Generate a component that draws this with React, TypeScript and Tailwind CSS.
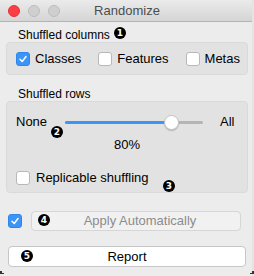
import React from "react";

const Badge = ({ n, className }: { n: string; className: string }) => (
  <div
    className={
      "absolute w-[12px] h-[12px] rounded-full bg-black text-white text-[9px] font-bold leading-none flex items-center justify-center " +
      className
    }
    style={{ fontFamily: '"DejaVu Sans", sans-serif' }}
  >
    {n}
  </div>
);

const Check = ({ checked }: { checked?: boolean }) =>
  checked ? (
    <div className="w-[14px] h-[14px] rounded-[3px] bg-[#3b95f8] border border-[#2f86ea] flex items-center justify-center shrink-0">
      <svg width="10" height="10" viewBox="0 0 10 10">
        <path d="M2 5.3 L4.2 7.5 L8 2.5" stroke="white" strokeWidth="1.5" fill="none" strokeLinecap="round" strokeLinejoin="round" />
      </svg>
    </div>
  ) : (
    <div className="w-[14px] h-[14px] rounded-[3px] bg-white border border-[#b8b8b8] shrink-0" />
  );

export default function App() {
  return (
    <div
      className="relative w-[254px] h-[276px] bg-[#ececec] text-[13px] text-black overflow-hidden"
      style={{ fontFamily: '"Liberation Sans", Arial, sans-serif' }}
    >
      {/* title bar */}
      <div className="relative h-[22px] bg-gradient-to-b from-[#ebebeb] to-[#d5d5d5] border-b border-[#b4b4b4] flex items-center justify-center">
        <div className="absolute left-[8px] top-[5px] flex gap-[8px]">
          <div className="w-[12px] h-[12px] rounded-full bg-[#fc3d44] border border-[#e0343b]" />
          <div className="w-[12px] h-[12px] rounded-full bg-[#cfcfcf] border border-[#bdbdbd]" />
          <div className="w-[12px] h-[12px] rounded-full bg-[#cfcfcf] border border-[#bdbdbd]" />
        </div>
        <span className="text-[13px] text-[#4d4d4d]">Randomize</span>
      </div>

      <div className="flex flex-col px-[6px] pr-[6px]">
        <div className="pl-[12px] pt-[7px] h-[20px] leading-[13px] text-[12px]">Shuffled columns</div>
        <div className="h-[33px] rounded-[4px] bg-[#e2e2e2] border border-[#dadada] flex items-center pl-[9px] gap-[17px]">
          <div className="flex items-center gap-[5px]">
            <Check checked />
            <span>Classes</span>
          </div>
          <div className="flex items-center gap-[5px]">
            <Check />
            <span>Features</span>
          </div>
          <div className="flex items-center gap-[5px]">
            <Check />
            <span>Metas</span>
          </div>
        </div>

        <div className="pl-[12px] pt-[13px] h-[26px] leading-[13px] text-[12px]">Shuffled rows</div>
        <div className="h-[92px] rounded-[4px] bg-[#e2e2e2] border border-[#dadada] flex flex-col pl-[9px]">
          <div className="flex items-center h-[20px] mt-[10px]">
            <span className="w-[49px]">None</span>
            <div className="relative w-[138px] h-[3px] rounded-full bg-[#b5b5b5]">
              <div className="absolute left-0 top-0 h-[3px] w-[106px] rounded-full bg-[#3b95f8]" />
              <div className="absolute left-[99px] top-[-6px] w-[15px] h-[15px] rounded-full bg-white border border-[#c4c4c4] shadow-[0_1px_1px_rgba(0,0,0,0.2)]" />
            </div>
            <span className="ml-[17px]">All</span>
          </div>
          <div className="text-center pr-[9px] mt-[6px] leading-[14px]">80%</div>
          <div className="flex items-center gap-[6px] mt-[16px]">
            <Check />
            <span>Replicable shuffling</span>
          </div>
        </div>
      </div>

      <div className="flex items-center gap-[9px] pl-[8px] mt-[18px]">
        <Check checked />
        <div className="w-[210px] h-[20px] rounded-[4px] bg-[#f1f1f1] border border-[#d6d6d6] flex items-center justify-center text-[#8c8c8c] pl-[8px]">
          Apply Automatically
        </div>
      </div>

      <div className="mx-[8px] mt-[15px] w-[238px] h-[21px] rounded-[4px] bg-white border border-[#c6c6c6] flex items-center justify-center">
        Report
      </div>

      <div className="absolute right-0 top-0 bottom-0 w-[2px] bg-[#e4e4e4]" />
      <div className="absolute left-0 bottom-[2px] w-[2px] h-[3px] bg-[#333]" />
      <div className="absolute left-0 bottom-[2px] w-[4px] h-[1px] bg-[#333]" />
      <div className="absolute right-0 bottom-[2px] w-[2px] h-[3px] bg-[#333]" />
      <div className="absolute right-0 bottom-[2px] w-[4px] h-[1px] bg-[#333]" />

      <Badge n="1" className="left-[114px] top-[27px]" />
      <Badge n="2" className="left-[51px] top-[126px]" />
      <Badge n="3" className="left-[163px] top-[180px]" />
      <Badge n="4" className="left-[38px] top-[214px]" />
      <Badge n="5" className="left-[21px] top-[250px]" />
    </div>
  );
}
